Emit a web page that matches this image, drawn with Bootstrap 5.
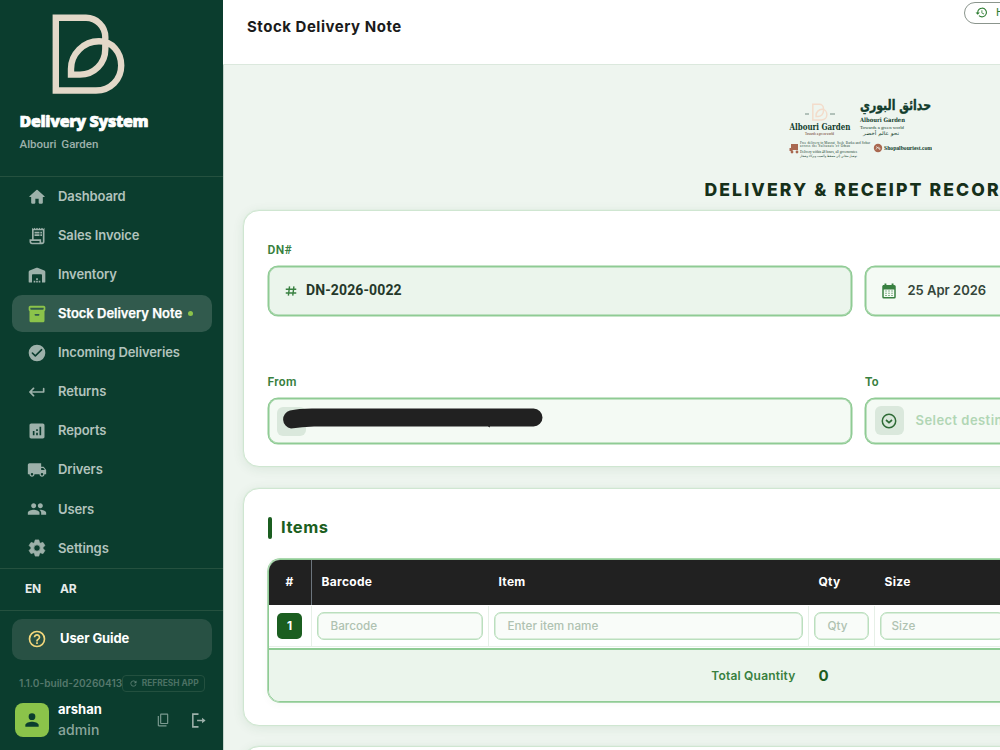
<!DOCTYPE html>
<html lang="en">
<head>
<meta charset="utf-8">
<meta name="viewport" content="width=device-width, initial-scale=1">
<title>Stock Delivery Note</title>
<link href="https://cdn.jsdelivr.net/npm/bootstrap@5.3.0/dist/css/bootstrap.min.css" rel="stylesheet">
<style>
body{height:750px;overflow:hidden;background:#eef5ef;font-family:Inter,"Liberation Sans",sans-serif;font-size:13px;line-height:1.2;color:#1b1b1b}
.rb{font-family:Roboto,"Liberation Sans",sans-serif}
.side{width:223px;background:#0b3d2e;flex:none;box-shadow:0 0 1px #0b3d2e}
.brand{height:177px;padding:14px 0 0 19.5px;border-bottom:1px solid #25513f}
.brand svg{margin-left:32.5px;display:block}
.brand-name{font:800 16px "Open Sans","Noto Sans",sans-serif;color:#fff;-webkit-text-stroke:.7px #fff;line-height:20px;margin-top:16px;white-space:nowrap;letter-spacing:-.33px}
.brand-sub{font-size:11.5px;font-weight:500;color:#9db1ab;line-height:16px;margin-top:5px;letter-spacing:0;word-spacing:2px}
.menu{height:392px;padding-top:1px;border-bottom:1px solid #25513f}
.menu .nav-link{height:37.1px;flex:none;margin:0 11.5px 2px;padding:0 0 0 15.5px;border-radius:10px;color:#b2c3bd;font-size:13px;font-weight:600;white-space:nowrap;gap:11px;letter-spacing:-.11px}
.menu svg{width:20px;height:20px;fill:#9db1aa;flex:none}
.menu .nav-link.active{background:#315a4d;color:#fff;letter-spacing:-.01px;-webkit-text-stroke:.25px #fff}
.menu .nav-link.active svg{fill:#8bc34a}
.dot{width:5px;height:5px;border-radius:50%;background:#8bc34a;margin-left:-5px}
.lang{height:42px;border-bottom:1px solid #25513f;color:#e6ecea;font-size:12px;font-weight:700;padding:0 0 0 25px;gap:19px;letter-spacing:-.2px}
.guide{height:41px;margin:8px 11.5px 0;padding-left:15.5px;border-radius:10px;background:#285144;color:#fff;font-weight:700;font-size:13px;gap:13px;letter-spacing:-.1px;padding-bottom:2px}
.ver{height:17px;margin:15px 0 0 19px;color:#55786c;font-size:10.1px;font-weight:600;white-space:nowrap}
.refresh{width:83px;height:17.5px;border:1px solid #23503f;border-radius:4px;font-size:8.4px;gap:4px;color:#4b7164;font-weight:700}
.user{margin:10px 0 0 15px;height:36px}
.avatar{width:33.5px;height:34px;border-radius:8px;background:#8bc34a}
.top{height:65px;background:#fff;border-bottom:1px solid #dbe8dd;padding:17px 0 0 24px;flex:none}
.top h1{font-size:15px;font-weight:700;line-height:19px;letter-spacing:.52px;margin:0}
.hist{width:90px;height:22px;border:1px solid #8b958d;border-radius:11px;margin:-15.5px -54px 0 0;padding-left:10px;color:#2e7d32;font-size:11px;flex:none}
.wide{width:1234px;margin-left:20px}
.title{font-size:17.6px;font-weight:800;letter-spacing:2.1px;line-height:22px;color:#16301a;margin:16px 0 9px;text-align:center}
.panel{background:#fff;border:1px solid #cfe6d1;border-radius:16px;box-shadow:0 0 0 .5px #dcecdd,0 2px 12px rgba(30,90,40,.09)}
.lab{font-size:12px;font-weight:600;color:#388040;letter-spacing:.35px;line-height:15px}
.field{border:1px solid #8fcb94;box-shadow:0 0 0 .5px #8fcb94,inset 0 0 0 .5px #8fcb94;border-radius:10px;background:#f4faf4;width:584.5px}
.chip{width:29px;height:29px;border-radius:6px;background:#dae8dc}
.scribble{left:5.5px;top:1px}
.bar{width:4px;height:22px;border-radius:2px;background:#1b5e20}
.grid-box{border:1px solid #8fcb94;border-radius:12px;overflow:hidden;height:143px;box-shadow:0 0 0 .7px #8fcb94,0 2px 8px rgba(30,90,40,.05)}
.ghead{height:45px;background:#212121;color:#fff;font-weight:700;font-size:12px;letter-spacing:.3px}
.c0{width:43px;flex:none}.c1{width:177px;flex:none}.c2{width:320px;flex:none}.c3{width:66px;flex:none}.c4{width:190px;flex:none}
.grow{height:43px;padding-top:1px}
.grow>div{border-right:1px solid #e6f0e7;border-bottom:1px solid #e6f0e7;height:40.5px}
.inp{border:1px solid #bbdfbe;box-shadow:inset 0 0 0 .5px #bbdfbe;border-radius:7px;background:#f9fcf9;color:#afc2b1;height:28px;font-size:11.7px;font-weight:500;padding-left:13px;letter-spacing:.02px}
.num{width:25.5px;height:26px;background:#1b5e20;color:#fff;border-radius:5px;font-weight:700;font-size:12px}
.gfoot{border-top:2px solid #8fcb94;background:#ebf5ec;height:54px}
</style>
</head>
<body class="d-flex">
<aside class="side">
  <div class="brand">
    <svg width="74" height="81" viewBox="0 0 74 81" fill="none" stroke="#e3d8c8" stroke-width="6.4"><path d="M3.800 3.800H34A19.300 19.300 0 0 1 53.300 23V35C53.300 49.500 42 60.600 28 60.600H19V55C19 40 31.500 27.300 47 27.300C60 27.300 69.200 38 69.200 51.500C69.200 65.500 58.500 76.500 44 76.500H3.800Z"/></svg>
    <div class="brand-name">Delivery System</div>
    <div class="brand-sub rb">Albouri Garden</div>
  </div>
  <nav class="menu nav flex-column flex-nowrap">
    <a class="nav-link d-flex align-items-center"><svg viewBox="0 0 24 24"><path d="M10 19v-5h4v5c0 .6.4 1 1 1h3c.6 0 1-.4 1-1v-7h1.700c.5 0 .7-.6.3-.9L12.700 3.600a1 1 0 0 0-1.400 0L3 11.100c-.4.3-.2.9.3.9H5v7c0 .6.4 1 1 1h3c.6 0 1-.4 1-1z"/></svg>Dashboard</a>
    <a class="nav-link d-flex align-items-center"><svg viewBox="0 0 24 24"><path d="M19.500 3.500L18 2l-1.500 1.500L15 2l-1.500 1.500L12 2l-1.500 1.500L9 2 7.500 3.500 6 2v14H3v3c0 1.660 1.340 3 3 3h12c1.660 0 3-1.340 3-3V2l-1.500 1.500zM15 20H6c-.55 0-1-.45-1-1v-1h10v2zm4-1c0 .55-.45 1-1 1s-1-.45-1-1v-3H8V5h11v14zM9 7h6v2H9zM16 7h2v2h-2zM9 10h6v2H9zM16 10h2v2h-2z"/></svg>Sales Invoice</a>
    <a class="nav-link d-flex align-items-center"><svg viewBox="0 0 24 24"><path d="M2 8.300C2 7.500 2.500 6.800 3.200 6.500L11.300 3.300a2 2 0 0 1 1.400 0L20.800 6.500C21.500 6.800 22 7.500 22 8.300V20a1 1 0 0 1-1 1h-3V12a1 1 0 0 0-1-1H7a1 1 0 0 0-1 1v9H3a1 1 0 0 1-1-1zM11 16h2v2h-2zM8 19h2v2H8zM11 19h2v2h-2zM14 19h2v2h-2z"/></svg>Inventory</a>
    <a class="nav-link active d-flex align-items-center"><svg viewBox="0 0 24 24"><path d="M20 2H4c-1 0-2 .9-2 2v3c0 .72.43 1.340 1 1.700V20c0 1.100 1.100 2 2 2h14c.9 0 2-.9 2-2V8.700c.57-.36 1-.98 1-1.700V4c0-1.100-1-2-2-2zm-6 12h-4a1 1 0 0 1 0-2h4a1 1 0 0 1 0 2zm5-7H5a1 1 0 0 1-1-1V4.500h16V6a1 1 0 0 1-1 1z"/></svg>Stock Delivery Note<span class="dot"></span></a>
    <a class="nav-link d-flex align-items-center"><svg viewBox="0 0 24 24"><path d="M12 2a10 10 0 1 0 0 20 10 10 0 0 0 0-20zM9.300 16.300l-3.600-3.600a1 1 0 0 1 1.400-1.400L10 14.170l6.900-6.900a1 1 0 0 1 1.400 1.400l-7.600 7.600a1 1 0 0 1-1.400 0z"/></svg>Incoming Deliveries</a>
    <a class="nav-link d-flex align-items-center"><svg viewBox="0 0 24 24"><path d="M19 8v3H5.830l2.900-2.900a1 1 0 0 0-1.400-1.400l-4.600 4.600a1 1 0 0 0 0 1.400l4.600 4.600a1 1 0 0 0 1.400-1.400L5.830 13H20a1 1 0 0 0 1-1V8a1 1 0 0 0-2 0z"/></svg>Returns</a>
    <a class="nav-link d-flex align-items-center"><svg viewBox="0 0 24 24"><path d="M19 3H5c-1.100 0-2 .9-2 2v14c0 1.100.9 2 2 2h14c1.100 0 2-.9 2-2V5c0-1.100-.9-2-2-2zM9 17H7v-5h2v5zm4 0h-2v-3h2v3zm0-5h-2v-2h2v2zm4 5h-2V7h2v10z"/></svg>Reports</a>
    <a class="nav-link d-flex align-items-center"><svg class="overflow-visible" viewBox="0 0 24 24"><path d="M20 8h-3V4H3c-1.100 0-2 .9-2 2v11h2c0 1.660 1.340 3 3 3s3-1.340 3-3h6c0 1.660 1.340 3 3 3s3-1.340 3-3h2v-5l-3-4zM6 18.500a1.500 1.500 0 1 1 0-3 1.500 1.500 0 0 1 0 3zm13.500-9l1.960 2.500H17V9.500h2.500zM18 18.500a1.500 1.500 0 1 1 0-3 1.500 1.500 0 0 1 0 3z"/></svg>Drivers</a>
    <a class="nav-link d-flex align-items-center"><svg viewBox="0 0 24 24"><path d="M16 11c1.660 0 2.990-1.340 2.990-3S17.660 5 16 5s-3 1.340-3 3 1.340 3 3 3zm-8 0c1.660 0 2.990-1.340 2.990-3S9.660 5 8 5 5 6.340 5 8s1.340 3 3 3zm0 2c-2.330 0-7 1.170-7 3.500V19h14v-2.500c0-2.330-4.670-3.500-7-3.500zm8 0c-.29 0-.62.02-.97.05 1.160.84 1.970 1.970 1.970 3.450V19h6v-2.500c0-2.330-4.670-3.500-7-3.500z"/></svg>Users</a>
    <a class="nav-link d-flex align-items-center"><svg viewBox="0 0 24 24"><path stroke="#9db1aa" stroke-width="1" d="M19.140 12.940c.04-.3.06-.61.06-.94 0-.32-.02-.64-.07-.94l2.030-1.580c.18-.14.23-.41.12-.61l-1.920-3.320c-.12-.22-.37-.29-.59-.22l-2.390.96c-.5-.38-1.030-.7-1.620-.94l-.36-2.540c-.04-.24-.24-.41-.48-.41h-3.840c-.24 0-.43.17-.47.41l-.36 2.540c-.59.24-1.130.57-1.620.94l-2.390-.96c-.22-.08-.47 0-.59.22L2.740 8.870c-.12.21-.08.47.12.61l2.030 1.580c-.05.3-.09.63-.09.94s.02.64.07.94l-2.030 1.580c-.18.14-.23.41-.12.61l1.920 3.320c.12.22.37.29.59.22l2.390-.96c.5.38 1.030.7 1.620.94l.36 2.540c.05.24.24.41.48.41h3.840c.24 0 .44-.17.47-.41l.36-2.540c.59-.24 1.130-.56 1.620-.94l2.390.96c.22.08.47 0 .59-.22l1.920-3.320c.12-.22.07-.47-.12-.61l-2.010-1.580zM12 15.900a3.900 3.900 0 1 1 0-7.800 3.900 3.900 0 0 1 0 7.800z"/></svg>Settings</a>
  </nav>
  <div class="lang d-flex align-items-center"><span>EN</span><span>AR</span></div>
  <div class="guide d-flex align-items-center"><svg width="20" height="20" viewBox="0 0 24 24" fill="#f3d77c"><path d="M11 18h2v-2h-2v2zm1-16a10 10 0 1 0 0 20 10 10 0 0 0 0-20zm0 18a8 8 0 1 1 0-16 8 8 0 0 1 0 16zm0-14c-2.210 0-4 1.790-4 4h2c0-1.100.9-2 2-2s2 .9 2 2c0 2-3 1.750-3 5h2c0-2.250 3-2.500 3-5 0-2.210-1.790-4-4-4z"/></svg>User Guide</div>
  <div class="ver d-flex align-items-center"><span>1.1.0-build-20260413</span><span class="refresh d-flex align-items-center justify-content-center"><svg width="9" height="9" viewBox="0 0 24 24" fill="#5d8074"><path d="M17.650 6.350A8 8 0 1 0 19.730 14h-2.080A6 6 0 1 1 12 6c1.660 0 3.140.69 4.220 1.780L13 11h7V4z"/></svg>REFRESH APP</span></div>
  <div class="user d-flex align-items-center">
    <div class="avatar d-flex align-items-center justify-content-center"><svg width="20" height="20" viewBox="0 0 24 24" fill="#0b3d2e"><circle cx="12" cy="8" r="4"/><path d="M12 14c-2.670 0-8 1.340-8 4v2h16v-2c0-2.660-5.330-4-8-4z"/></svg></div>
    <div style="margin:0 0 1px 9.5px;width:98px"><div class="text-white fw-bold" style="line-height:20px">arshan</div><div style="font:500 14px/22px Inter,sans-serif;color:#8ba69d;letter-spacing:.1px">admin</div></div>
    <svg width="14" height="14" viewBox="0 0 24 24" fill="#7b9a90"><path d="M19 1H9C7.900 1 7 1.900 7 3v14c0 1.100.9 2 2 2h10c1.100 0 2-.9 2-2V3c0-1.100-.9-2-2-2zm0 16H9V3h10zM3 5v16c0 1.100.9 2 2 2h13v-2H5V5z"/></svg>
    <svg class="ms-auto me-3" width="17" height="17" viewBox="0 0 24 24" fill="none" stroke="#9db1aa" stroke-width="2.200"><path d="M12 3H4v18h8M10 12h10"/><path d="M17 8l5 4-5 4z" fill="#9db1aa" stroke="none"/></svg>
  </div>
</aside>
<main class="flex-grow-1 overflow-hidden">
  <header class="top d-flex justify-content-between"><h1>Stock Delivery Note</h1>
    <div class="hist d-flex align-items-center gap-2"><svg width="13" height="13" viewBox="0 0 24 24" fill="#2e7d32"><path d="M13 3a9 9 0 0 0-9 9H1l4 4 4-4H6a7 7 0 1 1 2.060 4.940l-1.420 1.420A9 9 0 1 0 13 3zm-1 5v5l4.280 2.540.72-1.210-3.500-2.080V8z"/></svg>History</div></header>
  <div class="wide">
    <svg class="d-block mx-auto" style="margin-top:33px" width="144" height="65" viewBox="0 0 144 65" font-family="'Liberation Serif',serif" font-weight="700" fill="#123d2d">
      <g fill="none" stroke="#f3dccb" stroke-width="7" transform="translate(24 5.500) scale(.215)"><path d="M3.800 3.800H34A19.300 19.300 0 0 1 53.300 23V35C53.300 49.500 42 60.600 28 60.600H19V55C19 40 31.500 27.300 47 27.300C60 27.300 69.200 38 69.200 51.500C69.200 65.500 58.500 76.500 44 76.500H3.800Z"/></g>
      <path d="M17 16h4M42 16h5" stroke="#55756a" stroke-width=".8"/>
      <text x="1.500" y="31.500" font-size="8.500" font-family="'DejaVu Serif',serif" textLength="61" lengthAdjust="spacingAndGlyphs">Albouri Garden</text>
      <text x="17" y="37" font-size="3" textLength="29" fill="#8f6a60">Towards a green world</text>
      <text x="143" y="12" font-size="14" font-family="'DejaVu Sans',sans-serif" stroke="#123d2d" stroke-width=".4" text-anchor="end" textLength="71" lengthAdjust="spacingAndGlyphs">حدائق البوري</text>
      <text x="72" y="24" font-size="6" font-family="'DejaVu Serif',serif" textLength="45" lengthAdjust="spacingAndGlyphs">Albouri Garden</text>
      <text x="72" y="31" font-size="4.500" font-weight="400" textLength="44" lengthAdjust="spacingAndGlyphs">Towards a green world</text>
      <text x="111" y="37" font-size="5" font-weight="400" text-anchor="end" font-family="'DejaVu Sans'" textLength="36" lengthAdjust="spacingAndGlyphs">نحو عالم أخضر</text>
      <g fill="#a96850"><path d="M3 46h7v6H3zM1.500 50h3v3h-3z"/><circle cx="4" cy="54" r="1.400"/><circle cx="9" cy="54" r="1.400"/><circle cx="90" cy="50" r="4.200"/></g>
      <path d="M88 48.500l4 3M88 51.500c1-3 4-3 4 0" fill="none" stroke="#eef5ef" stroke-width=".7"/>
      <g font-size="3.300" font-weight="400"><text x="12" y="45.500" textLength="70">Free delivery to Muscat, Seeb, Barka and Sohar</text><text x="12" y="49.300" textLength="50">across the Sultanate of Oman</text><text x="12" y="54.500" textLength="57">Delivery within 48 hours, all governorates</text><text x="69" y="58.700" text-anchor="end" font-family="'DejaVu Sans'" textLength="57" lengthAdjust="spacingAndGlyphs">توصيل مجاني إلى مسقط والسيب وبركاء وصحار</text></g>
      <text x="96" y="51.800" font-size="5.500" textLength="48" lengthAdjust="spacingAndGlyphs">Shopalbouriest.com</text>
    </svg>
    <h2 class="title">DELIVERY &amp; RECEIPT RECORD</h2>
    <section class="panel" style="height:257px;padding:32px 23.5px 0">
      <div class="d-flex" style="gap:13px">
        <div><div class="lab rb">DN#</div>
          <div class="field d-flex align-items-center" style="height:50px;margin-top:7.500px;background:#ebf5ec;padding-left:15px">
            <svg width="14" height="14" viewBox="0 0 24 24" stroke="#388040" stroke-width="2.400"><path d="M9.500 4L7.500 20M17 4l-2 16M3 9h18M3 15.500h18"/></svg>
            <b class="rb" style="font-size:14px;color:#24382a;margin-left:8.500px;letter-spacing:.12px">DN-2026-0022</b></div></div>
        <div><div class="lab">&nbsp;</div>
          <div class="field d-flex align-items-center" style="height:50px;margin-top:7.500px;padding-left:14px">
            <svg width="18" height="18" viewBox="0 0 24 24"><path fill="#388040" d="M5 4h1V2h2.500v2h7V2H18v2h1a2 2 0 0 1 2 2v14a2 2 0 0 1-2 2H5a2 2 0 0 1-2-2V6c0-1.100.9-2 2-2z"/><path fill="#f4faf4" d="M5 10h14v10H5z"/><path stroke="#388040" stroke-opacity=".75" stroke-width="1.500" stroke-dasharray="2 2" d="M7 12h11M7 15h11M7 18h11"/></svg>
            <span style="font-size:13px;font-weight:600;color:#34463a;margin-left:9.500px">25 Apr 2026</span></div></div>
      </div>
      <div class="d-flex" style="gap:13px;margin-top:59.500px">
        <div><div class="lab rb">From</div>
          <div class="field position-relative" style="height:46.500px;margin-top:7.500px;padding:8.500px"><div class="chip"></div>
            <svg class="position-absolute scribble" width="270" height="30" viewBox="0 0 270 30"><path fill="#212121" d="M16 10.500Q24 8.500 38 8.500H259.500A9 9 0 0 1 259.500 26.500H216L215.500 27.500L214 26.500H40Q28 27 17 28.500A9.200 9.200 0 0 1 16 10.500Z"/></svg></div></div>
        <div><div class="lab rb">To</div>
          <div class="field d-flex align-items-center" style="height:46.500px;margin-top:7.500px;padding-left:8.500px"><div class="chip d-flex align-items-center justify-content-center"><svg width="16" height="16" viewBox="0 0 16 16" fill="none" stroke="#2e6b36" stroke-width="1.500"><circle cx="8" cy="8" r="6.700"/><path d="M5 7l3 2.600L11 7" stroke-width="1.700"/></svg></div>
            <span style="font-size:13px;font-weight:600;color:#b1d6b4;margin-left:12px;letter-spacing:.45px">Select destination</span></div></div>
      </div>
    </section>
    <section class="panel" style="height:238px;margin-top:21px;padding:27.500px 23.500px 0">
      <div class="d-flex align-items-center"><span class="bar"></span><span style="font-size:16.500px;font-weight:700;color:#1b5e20;margin-left:9.500px;line-height:20px;letter-spacing:.55px;margin-top:-1px">Items</span></div>
      <div class="grid-box" style="margin-top:20.500px">
        <div class="ghead d-flex align-items-center">
          <div class="c0 h-100 d-flex align-items-center justify-content-center border-end border-secondary">#</div><div class="c1" style="padding-left:10px">Barcode</div><div class="c2" style="padding-left:10px">Item</div><div class="c3" style="padding-left:10px">Qty</div><div class="c4" style="padding-left:10px">Size</div>
        </div>
        <div class="grow d-flex">
          <div class="c0 d-flex align-items-center justify-content-center"><span class="num d-flex align-items-center justify-content-center">1</span></div>
          <div class="c1 d-flex align-items-center" style="padding:0 5px"><span class="inp w-100 d-flex align-items-center">Barcode</span></div>
          <div class="c2 d-flex align-items-center" style="padding:0 5px"><span class="inp w-100 d-flex align-items-center">Enter item name</span></div>
          <div class="c3 d-flex align-items-center" style="padding:0 5px"><span class="inp w-100 d-flex align-items-center">Qty</span></div>
          <div class="c4 d-flex align-items-center" style="padding:0 5px"><span class="inp d-flex align-items-center" style="width:125px;padding-left:11px">Size</span></div>
        </div>
        <div class="gfoot d-flex align-items-center"><div class="text-end" style="width:527px;font-size:12px;font-weight:600;color:#388040;letter-spacing:.2px">Total Quantity</div><div style="margin-left:23px;font-size:15px;font-weight:700;color:#1b5e20">0</div></div>
      </div>
    </section>
    <section class="panel" style="height:100px;margin-top:20px"></section>
  </div>
</main>
<script src="https://cdn.jsdelivr.net/npm/bootstrap@5.3.0/dist/js/bootstrap.bundle.min.js"></script>
</body>
</html>
